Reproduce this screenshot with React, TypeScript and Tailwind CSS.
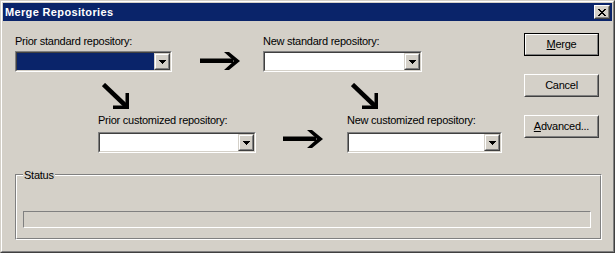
import React from "react";

function DropButton() {
  return (
    <div className="w-[16px] h-full border border-t-[#d4d0c8] border-l-[#d4d0c8] border-r-[#404040] border-b-[#404040] bg-[#d4d0c8]">
      <div className="w-full h-full border border-t-white border-l-white border-r-[#808080] border-b-[#808080] flex items-center justify-center">
        <svg width="7" height="4" viewBox="0 0 7 4" shapeRendering="crispEdges">
          <polygon points="0,0 7,0 3.5,4" fill="black" />
        </svg>
      </div>
    </div>
  );
}

function Combo({ className, selected }: { className: string; selected?: boolean }) {
  return (
    <div
      className={
        "h-[21px] flex border border-t-[#808080] border-l-[#808080] border-r-white border-b-white " +
        className
      }
    >
      <div className="flex flex-1 border border-t-[#404040] border-l-[#404040] border-r-[#d4d0c8] border-b-[#d4d0c8]">
        <div className={selected ? "flex-1 bg-[#0a246a]" : "flex-1 bg-white"} />
        <DropButton />
      </div>
    </div>
  );
}

function RightArrow({ className }: { className: string }) {
  return (
    <svg className={className} width="40" height="18" viewBox="0 0 40 18">
      <rect x="0" y="6.5" width="33" height="4.5" fill="black" />
      <polygon points="24,0 29,0 40,9 29,18 24,18 34,9" fill="black" />
    </svg>
  );
}

function DiagArrow({ className }: { className: string }) {
  return (
    <svg className={className} width="27" height="26" viewBox="0 0 27 26">
      <line x1="1.5" y1="1.5" x2="24" y2="23" stroke="black" strokeWidth="4.5" />
      <rect x="11" y="22.5" width="16" height="3.5" fill="black" />
      <rect x="23.5" y="10" width="3.5" height="16" fill="black" />
    </svg>
  );
}

function Btn({ children, isDefault }: { children: React.ReactNode; isDefault?: boolean }) {
  if (isDefault) {
    return (
      <div className="h-[23px] w-[75px] border border-black">
        <div className="w-full h-full border border-t-white border-l-white border-r-[#808080] border-b-[#808080] flex items-center justify-center">
          <span>{children}</span>
        </div>
      </div>
    );
  }
  return (
    <div className="h-[23px] w-[75px] border border-t-white border-l-white border-r-[#404040] border-b-[#404040]">
      <div className="w-full h-full border border-t-[#d4d0c8] border-l-[#d4d0c8] border-r-[#808080] border-b-[#808080] flex items-center justify-center">
        <span>{children}</span>
      </div>
    </div>
  );
}

export default function App() {
  return (
    <div className="w-[615px] h-[253px] bg-[#d4d0c8] font-['Liberation_Sans',Arial,sans-serif] text-[11px] leading-[13px] tracking-[-0.25px] text-black select-none">
      <div className="w-full h-full border border-t-[#d4d0c8] border-l-[#d4d0c8] border-r-[#404040] border-b-[#404040]">
        <div className="w-full h-full border border-t-white border-l-white border-r-[#808080] border-b-[#808080] p-px flex flex-col">
          {/* Title bar */}
          <div className="h-[18px] bg-[#0a246a] flex items-center pl-[2px] pr-[2px]">
            <span className="flex-1 text-white font-bold tracking-[0.35px]">Merge Repositories</span>
            <div className="w-[16px] h-[14px] border border-t-white border-l-white border-r-[#404040] border-b-[#404040] bg-[#d4d0c8]">
              <div className="w-full h-full border border-t-[#d4d0c8] border-l-[#d4d0c8] border-r-[#808080] border-b-[#808080] flex items-center justify-center">
                <svg width="8" height="7" viewBox="0 0 8 7" shapeRendering="crispEdges">
                  <path
                    d="M0 0h2v1h1v1h2v-1h1v-1h2v1h-1v1h-1v1h-1v1h1v1h1v1h1v1h-2v-1h-1v-1h-2v1h-1v1h-2v-1h1v-1h1v-1h1v-1h-1v-1h-1v-1h-1z"
                    fill="black"
                  />
                </svg>
              </div>
            </div>
          </div>

          {/* Body */}
          <div className="flex flex-col flex-1">
            <div className="flex">
              <div className="w-[521px] flex flex-col pl-[12px] pt-[14px]">
                <div className="flex">
                  <div className="w-[248px]">Prior standard repository:</div>
                  <div>New standard repository:</div>
                </div>
                <div className="flex items-start mt-[3px]">
                  <Combo className="w-[157px]" selected />
                  <RightArrow className="ml-[28px] mt-[1px]" />
                  <Combo className="ml-[23px] w-[159px]" />
                </div>
                <div className="flex mt-[11px]">
                  <DiagArrow className="ml-[87px]" />
                  <DiagArrow className="ml-[222px]" />
                </div>
                <div className="flex mt-[5px]">
                  <div className="ml-[83px] w-[249px]">Prior customized repository:</div>
                  <div>New customized repository:</div>
                </div>
                <div className="flex items-start mt-[5px]">
                  <Combo className="ml-[83px] w-[158px]" />
                  <RightArrow className="ml-[27px] -mt-[2px]" />
                  <Combo className="ml-[24px] w-[155px]" />
                </div>
              </div>
              <div className="flex flex-col pt-[12px] gap-[18px]">
                <Btn isDefault>
                  <span className="underline underline-offset-[1px]">M</span>erge
                </Btn>
                <Btn>Cancel</Btn>
                <Btn>
                  <span className="underline underline-offset-[1px]">A</span>dvanced...
                </Btn>
              </div>
            </div>

            {/* Status group */}
            <div className="relative mt-[21px] ml-[12px] w-[587px] h-[66px] border border-t-[#808080] border-l-[#808080] border-r-white border-b-white">
              <div className="w-full h-full border border-t-white border-l-white border-r-[#808080] border-b-[#808080] flex flex-col">
                <div className="mt-[35px] ml-[6px] w-[568px] h-[17px] border border-t-[#808080] border-l-[#808080] border-r-white border-b-white" />
              </div>
              <span className="absolute left-[7px] top-[-6px] px-px bg-[#d4d0c8]">Status</span>
            </div>
          </div>
        </div>
      </div>
    </div>
  );
}
